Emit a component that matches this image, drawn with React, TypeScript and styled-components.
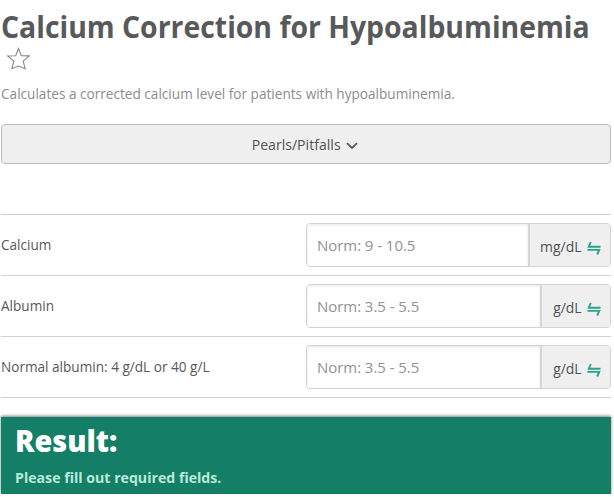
import React from 'react';
import styled, { createGlobalStyle } from 'styled-components';

const GlobalStyle = createGlobalStyle`
  * { box-sizing: border-box; }
  body {
    margin: 0;
    background: #fff;
    color: #56585a;
    font-family: "Open Sans", "Noto Sans", sans-serif;
    font-size: 15px;
    line-height: 20px;
  }
`;

const Condensed = styled.span<{ $scale: number; $origin?: string }>`
  display: inline-block;
  white-space: nowrap;
  transform: scaleX(${(p) => p.$scale});
  transform-origin: ${(p) => p.$origin ?? 'left'} center;
`;

const Page = styled.main`
  width: 610px;
  margin-left: 1px;
`;

const Header = styled.header`
  height: 124px;
  padding-top: 7px;
`;

const Title = styled.h1`
  margin: 0;
  font-size: 30px;
  font-weight: 700;
  line-height: 40px;
  color: #58595b;
`;

const FavoriteButton = styled.button`
  display: block;
  width: 24px;
  height: 24px;
  margin-left: 5px;
  padding: 0;
  border: 0;
  background: none;

  svg { display: block; }
`;

const Description = styled.p`
  margin: 12px 0 0;
  color: #8b8c8e;
`;

const PearlsButton = styled.button`
  display: flex;
  align-items: center;
  justify-content: center;
  gap: 6px;
  width: 100%;
  height: 40px;
  padding: 0 8px 0 0;
  border: 1px solid #bdbdbd;
  border-radius: 4px;
  background: #efefef;
  color: #505254;
  font: inherit;

  svg { margin-top: 4px; }
`;

const Fields = styled.section`
  margin-top: 50px;
  border-top: 1px solid #d0d0d0;
`;

const Field = styled.div`
  display: grid;
  grid-template-columns: 305px 305px;
  align-items: center;
  height: 61px;
  border-bottom: 1px solid #d0d0d0;
`;

const Label = styled.label`
  padding-bottom: 2px;
`;

const InputGroup = styled.div`
  display: flex;
  height: 44px;
  border: 1px solid #d3d3d3;
  border-radius: 4px;
  overflow: hidden;
`;

const Input = styled.input`
  flex: 1;
  min-width: 0;
  padding: 0 10px;
  border: 0;
  outline: 0;
  background: #fff;
  box-shadow: inset 0 1px 3px rgba(0, 0, 0, 0.1);
  color: #56585a;
  font: inherit;
  letter-spacing: -0.05px;

  &::placeholder { color: #929292; opacity: 1; }
`;

const UnitButton = styled.button<{ $wide?: boolean }>`
  display: flex;
  align-items: center;
  justify-content: flex-end;
  gap: 5px;
  width: ${(p) => (p.$wide ? 82 : 70)}px;
  padding: 2px 9px 0 0;
  border: 0;
  border-left: 2px solid #d6d6d6;
  background: #efefef;
  color: #505254;
  font: inherit;

  svg { margin-top: 4px; }
`;

const Result = styled.section`
  height: 77px;
  margin-top: 19px;
  padding: 4px 14px 0;
  background: #147e66;
  box-shadow: 0 -1px 3px rgba(0, 0, 0, 0.5);
`;

const ResultTitle = styled.h2`
  margin: 0;
  color: #fff;
  font-size: 30px;
  font-weight: 800;
  line-height: 40px;
`;

const ResultText = styled.p`
  margin: 6px 0 0;
  color: #b9eadb;
  font-weight: 700;
`;

const StarIcon = () => (
  <svg width="24" height="24" viewBox="0 0 24 24" fill="none" stroke="#85878a" strokeWidth="1.1">
    <path d="M12.5 1.5 15.3 8.7 23.3 8.9 17.2 14.1 19.1 21.7 12.5 19 5.9 21.7 7.8 14.1 1.7 8.9 9.7 8.7Z" />
  </svg>
);

const ChevronIcon = () => (
  <svg width="12" height="8" viewBox="0 0 12 8" fill="none" stroke="#56585a" strokeWidth="1.8">
    <path d="M1 1.2 6 6 11 1.2" />
  </svg>
);

const SwapIcon = () => (
  <svg width="14" height="14" viewBox="0 0 14 14" fill="none" stroke="#26a58b" strokeWidth="1.9">
    <path d="M13.5 5.7H1.8L3.8 1M.5 8.9H12.2L10.2 13.5" />
  </svg>
);

const fields = [
  { id: 'calcium', label: 'Calcium', norm: 'Norm: 9 - 10.5', unit: 'mg/dL', wide: true },
  { id: 'albumin', label: 'Albumin', norm: 'Norm: 3.5 - 5.5', unit: 'g/dL', wide: false },
  { id: 'normal', label: 'Normal albumin: 4 g/dL or 40 g/L', norm: 'Norm: 3.5 - 5.5', unit: 'g/dL', wide: false },
];

export default function App() {
  return (
    <>
      <GlobalStyle />
      <Page>
        <Header>
          <Title><Condensed $scale={0.946}>Calcium Correction for Hypoalbuminemia</Condensed></Title>
          <FavoriteButton aria-label="Add to favorites"><StarIcon /></FavoriteButton>
          <Description>
            <Condensed $scale={0.907}>Calculates a corrected calcium level for patients with hypoalbuminemia.</Condensed>
          </Description>
        </Header>
        <PearlsButton><Condensed $scale={0.94} $origin="right">Pearls/Pitfalls</Condensed><ChevronIcon /></PearlsButton>
        <Fields>
          {fields.map((f) => (
            <Field key={f.id}>
              <Label htmlFor={f.id}><Condensed $scale={0.906}>{f.label}</Condensed></Label>
              <InputGroup>
                <Input id={f.id} placeholder={f.norm} />
                <UnitButton $wide={f.wide}>
                  <Condensed $scale={0.93} $origin="right">{f.unit}</Condensed>
                  <SwapIcon />
                </UnitButton>
              </InputGroup>
            </Field>
          ))}
        </Fields>
        <Result>
          <ResultTitle><Condensed $scale={0.96}>Result:</Condensed></ResultTitle>
          <ResultText><Condensed $scale={0.943}>Please fill out required fields.</Condensed></ResultText>
        </Result>
      </Page>
    </>
  );
}
